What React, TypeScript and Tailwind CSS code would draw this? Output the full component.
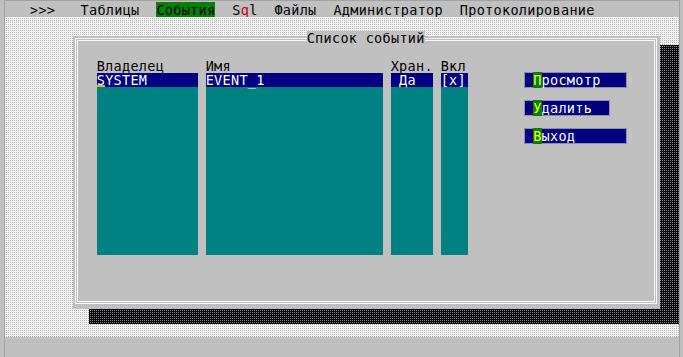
const mono =
  "font-['DejaVu_Sans_Mono','Liberation_Mono',monospace] text-[13.5px] leading-[14px] tracking-[0.3px]";

const dots =
  "bg-[image:linear-gradient(90deg,#f4f4f4_1px,transparent_1px),linear-gradient(#f4f4f4_1px,#b8b8b8_1px)] bg-[length:2px_2px]";

const darkDots =
  "bg-[image:linear-gradient(90deg,#050505_1px,transparent_1px),linear-gradient(#050505_1px,#7c7c8c_1px)] bg-[length:2px_2px]";

function Column({
  title,
  value,
  width,
  cursor,
}: {
  title: string;
  value: string;
  width: string;
  cursor?: boolean;
}) {
  return (
    <div className={`flex flex-col ${width}`}>
      <div className="h-[14px] whitespace-pre text-black">{title}</div>
      <div className="flex h-[182px] flex-col bg-[#008080]">
        <div className="h-[14px] whitespace-pre bg-[#000080] text-white">
          {cursor ? (
            <>
              <span className="inline-block h-[14px] shadow-[inset_0_-2px_0_#c8c800]">
                {value[0]}
              </span>
              {value.slice(1)}
            </>
          ) : (
            value
          )}
        </div>
      </div>
    </div>
  );
}

function HotButton({
  hot,
  rest,
  width,
}: {
  hot: string;
  rest: string;
  width: string;
}) {
  return (
    <div
      className={`h-[14px] whitespace-pre bg-[#000080] text-white shadow-[0_0_0_1px_#8e8eb0] ${width}`}
    >
      {" "}
      <span className="bg-[#008000] text-[#ffff00]">{hot}</span>
      {rest}
    </div>
  );
}

function App() {
  return (
    <div className={`flex h-[357px] w-[683px] overflow-hidden bg-[#c0c0c0] ${mono}`}>
      <div className="ml-[3.7px] flex h-full w-[676.4px] flex-col border-x border-t border-[#a2a2a2] pt-[2px]">
        {/* menu */}
        <div className="h-[14px] whitespace-pre text-black">
          {"   >>>   Таблицы  "}
          <span className="bg-[#008000]">События</span>
          {"  S"}
          <span className="text-[#c00000]">q</span>
          {"l  Файлы  Администратор  Протоколирование"}
        </div>

        {/* desktop */}
        <div className={`relative h-[320px] ${dots}`}>
          {/* shadow of the window */}
          <div className={`absolute left-[84px] top-[28px] h-[279px] w-[590px] ${darkDots}`} />

          <div className="relative ml-[68px] mt-[19px] flex h-[273px] w-[587px] flex-col bg-[#c0c0c0] pb-[5px] pl-[2px] pr-[3px] pt-[2px]">
            <div className="flex flex-1 flex-col border-[3px] border-double border-[#f8f8f8]">
              <div className="-mt-[10px] h-[14px] self-center whitespace-pre bg-[#c0c0c0] text-black">
                Список событий
              </div>

              <div className="mt-[14px] flex pl-[19px]">
                <div className="flex gap-[8px]">
                  <Column title="Владелец" value="SYSTEM" width="w-[101px]" cursor />
                  <Column title="Имя" value="EVENT_1" width="w-[177px]" />
                  <Column title="Хран." value=" Да" width="w-[42px]" />
                  <Column title="Вкл" value="[x]" width="w-[27px]" />
                </div>

                <div className="ml-[57px] flex flex-col gap-[14px] pt-[14px]">
                  <HotButton hot="П" rest="росмотр" width="w-[101px]" />
                  <HotButton hot="У" rest="далить" width="w-[84px]" />
                  <HotButton hot="В" rest="ыход" width="w-[101px]" />
                </div>
              </div>
            </div>
          </div>
        </div>
      </div>
    </div>
  );
}

export default App;
